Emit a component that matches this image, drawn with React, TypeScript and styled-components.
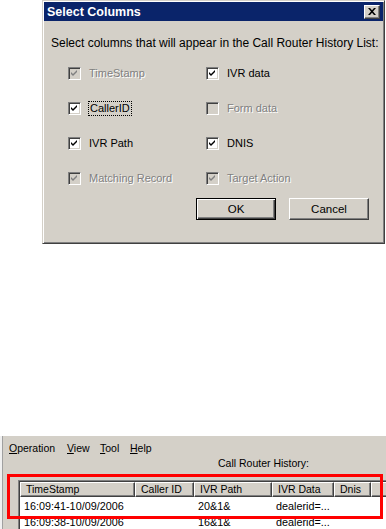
import React from "react";
import styled, { createGlobalStyle, css } from "styled-components";

const Global = createGlobalStyle`
  html, body { margin: 0; padding: 0; background: #ffffff; }
  body { width: 386px; height: 529px; overflow: hidden; font-family: "Liberation Sans", Arial, sans-serif; }
  #root { width: 386px; height: 529px; overflow: hidden; }
`;

const Page = styled.div`
  display: flex;
  flex-direction: column;
  width: 386px;
  height: 529px;
  overflow: hidden;
`;

const Dialog = styled.div`
  margin-left: 42px;
  width: 343px;
  height: 246px;
  box-sizing: border-box;
  background: #d4d0c8;
  border-top: 1px solid #d4d0c8;
  border-left: 1px solid #d4d0c8;
  border-right: 1px solid #404040;
  border-bottom: 1px solid #404040;
  box-shadow: inset 1px 1px 0 #ffffff, inset -1px -1px 0 #808080;
  padding: 1px;
  display: flex;
  flex-direction: column;
`;

const TitleBar = styled.div`
  height: 19px;
  background: #0a246a;
  display: flex;
  align-items: center;
  justify-content: space-between;
  padding: 0 3px 0 3px;
  color: #ffffff;
  font-weight: bold;
  font-size: 12.5px;
`;

const CloseBtn = styled.div`
  width: 16px;
  height: 14px;
  box-sizing: border-box;
  background: #d4d0c8;
  border-top: 1px solid #ffffff;
  border-left: 1px solid #ffffff;
  border-right: 1px solid #404040;
  border-bottom: 1px solid #404040;
  box-shadow: inset -1px -1px 0 #808080;
  display: flex;
  align-items: center;
  justify-content: center;
`;

const Body = styled.div`
  flex: 1;
  display: flex;
  flex-direction: column;
  padding: 15px 0 0 7px;
`;

const Description = styled.div`
  font-size: 12px;
  color: #000;
  line-height: 14px;
`;

const Grid = styled.div`
  display: grid;
  grid-template-columns: 138px 1fr;
  grid-auto-rows: 20px;
  row-gap: 15px;
  margin: 13px 0 0 17px;
`;

const CheckRow = styled.div`
  display: flex;
  align-items: center;
  gap: 8px;
`;

const Box = styled.div<{ $disabled?: boolean }>`
  width: 13px;
  height: 13px;
  box-sizing: border-box;
  border-top: 1px solid #808080;
  border-left: 1px solid #808080;
  border-right: 1px solid #ffffff;
  border-bottom: 1px solid #ffffff;
  box-shadow: inset 1px 1px 0 #404040, inset -1px -1px 0 #d4d0c8;
  background: ${(p) => (p.$disabled ? "#d4d0c8" : "#ffffff")};
  display: flex;
  align-items: center;
  justify-content: center;
  flex: none;
`;

const Label = styled.span<{ $disabled?: boolean; $focus?: boolean }>`
  font-size: 11px;
  line-height: 13px;
  color: ${(p) => (p.$disabled ? "#808080" : "#000000")};
  ${(p) => p.$disabled && css`text-shadow: 1px 1px 0 #ffffff;`}
  ${(p) => p.$focus && css`outline: 1px dotted #000; outline-offset: 0px; padding: 0 1px;`}
`;

const Buttons = styled.div`
  display: flex;
  justify-content: flex-end;
  gap: 13px;
  margin: 10px 14px 0 0;
`;

const Button = styled.div<{ $default?: boolean }>`
  width: 80px;
  height: 22px;
  box-sizing: border-box;
  background: #d4d0c8;
  display: flex;
  align-items: center;
  justify-content: center;
  font-size: 11.5px;
  color: #000;
  ${(p) =>
    p.$default
      ? css`
          border: 1px solid #000000;
          box-shadow: inset 1px 1px 0 #ffffff, inset -1px -1px 0 #404040, inset -2px -2px 0 #808080;
        `
      : css`
          border-top: 1px solid #ffffff;
          border-left: 1px solid #ffffff;
          border-right: 1px solid #404040;
          border-bottom: 1px solid #404040;
          box-shadow: inset -1px -1px 0 #808080;
        `}
`;

const AppWindow = styled.div`
  margin-top: 192px;
  flex: 1;
  position: relative;
  background: #d4d0c8;
  border-left: 2px solid #f0f0f0;
  box-shadow: inset 1px 0 0 #a0a0a0;
  display: flex;
  flex-direction: column;
  font-size: 10.5px;
`;

const MenuBar = styled.div`
  display: flex;
  height: 20px;
  align-items: center;
  padding: 3px 0 0 7px;
  box-sizing: border-box;
`;

const MenuItem = styled.span<{ $w: number }>`
  width: ${(p) => p.$w}px;
  font-size: 10.5px;
  color: #000;
  u { text-decoration: underline; }
`;

const HistoryTitle = styled.div`
  padding-left: 216px;
  font-size: 10.5px;
  line-height: 12px;
  margin-top: 1px;
`;

const ListView = styled.div`
  margin: 11px 0 0 16px;
  flex: 1;
  background: #ffffff;
  border-top: 1px solid #808080;
  border-left: 1px solid #808080;
  box-shadow: inset 1px 1px 0 #404040;
  padding: 1px 0 0 1px;
  overflow: hidden;
`;

const HeaderRow = styled.div`
  display: flex;
  height: 15px;
`;

const HeaderCell = styled.div<{ $w: number }>`
  width: ${(p) => p.$w}px;
  flex: none;
  box-sizing: border-box;
  background: #d4d0c8;
  border-top: 1px solid #ffffff;
  border-left: 1px solid #ffffff;
  border-right: 1px solid #404040;
  border-bottom: 1px solid #404040;
  box-shadow: inset -1px -1px 0 #808080;
  padding-left: 5px;
  font-size: 10.5px;
  line-height: 13px;
  white-space: nowrap;
  overflow: hidden;
`;

const DataRow = styled.div`
  display: flex;
  height: 14px;
  margin-top: 2px;
`;

const DataCell = styled.div<{ $w: number }>`
  width: ${(p) => p.$w}px;
  flex: none;
  box-sizing: border-box;
  padding-left: 4px;
  font-size: 10.8px;
  line-height: 14px;
  white-space: nowrap;
`;

const Highlight = styled.div`
  position: absolute;
  left: 5px;
  top: 38px;
  width: 376px;
  height: 45px;
  box-sizing: border-box;
  border: 3px solid #ff0000;
  pointer-events: none;
`;

const Check = ({ color }: { color: string }) => (
  <svg width="7" height="7" viewBox="0 0 7 7">
    <path d="M0 2 L2 4 L6 0 L6 2 L2 6 L0 4 Z" fill={color} />
  </svg>
);

type Item = { label: string; checked: boolean; disabled?: boolean; focus?: boolean };

const items: Item[] = [
  { label: "TimeStamp", checked: true, disabled: true },
  { label: "IVR data", checked: true },
  { label: "CallerID", checked: true, focus: true },
  { label: "Form data", checked: false, disabled: true },
  { label: "IVR Path", checked: true },
  { label: "DNIS", checked: true },
  { label: "Matching Record", checked: true, disabled: true },
  { label: "Target Action", checked: true, disabled: true },
];

const cols = [
  { title: "TimeStamp", w: 115 },
  { title: "Caller ID", w: 59 },
  { title: "IVR Path", w: 78 },
  { title: "IVR Data", w: 62 },
  { title: "Dnis", w: 37 },
  { title: "", w: 60 },
];

const rows = [
  ["16:09:41-10/09/2006", "", "20&1&", "dealerid=...", "", ""],
  ["16:09:38-10/09/2006", "", "16&1&", "dealerid=...", "", ""],
];

export default function App() {
  return (
    <Page>
      <Global />
      <Dialog>
        <TitleBar>
          <span>Select Columns</span>
          <CloseBtn>
            <svg width="8" height="7" viewBox="0 0 8 7">
              <path d="M0 0h2l2 2.2L6 0h2L5 3.5 8 7H6L4 4.8 2 7H0l3-3.5z" fill="#000" />
            </svg>
          </CloseBtn>
        </TitleBar>
        <Body>
          <Description>Select columns that will appear in the Call Router History List:</Description>
          <Grid>
            {items.map((it) => (
              <CheckRow key={it.label}>
                <Box $disabled={it.disabled}>
                  {it.checked && <Check color={it.disabled ? "#808080" : "#000000"} />}
                </Box>
                <Label $disabled={it.disabled} $focus={it.focus}>
                  {it.label}
                </Label>
              </CheckRow>
            ))}
          </Grid>
          <Buttons>
            <Button $default>OK</Button>
            <Button>Cancel</Button>
          </Buttons>
        </Body>
      </Dialog>
      <AppWindow>
        <MenuBar>
          <MenuItem $w={58}><u>O</u>peration</MenuItem>
          <MenuItem $w={33}><u>V</u>iew</MenuItem>
          <MenuItem $w={30}><u>T</u>ool</MenuItem>
          <MenuItem $w={40}><u>H</u>elp</MenuItem>
        </MenuBar>
        <HistoryTitle>Call Router History:</HistoryTitle>
        <ListView>
          <HeaderRow>
            {cols.map((c, i) => (
              <HeaderCell key={i} $w={c.w}>{c.title}</HeaderCell>
            ))}
          </HeaderRow>
          {rows.map((r, ri) => (
            <DataRow key={ri}>
              {r.map((v, ci) => (
                <DataCell key={ci} $w={cols[ci].w}>{v}</DataCell>
              ))}
            </DataRow>
          ))}
        </ListView>
        <Highlight />
      </AppWindow>
    </Page>
  );
}
